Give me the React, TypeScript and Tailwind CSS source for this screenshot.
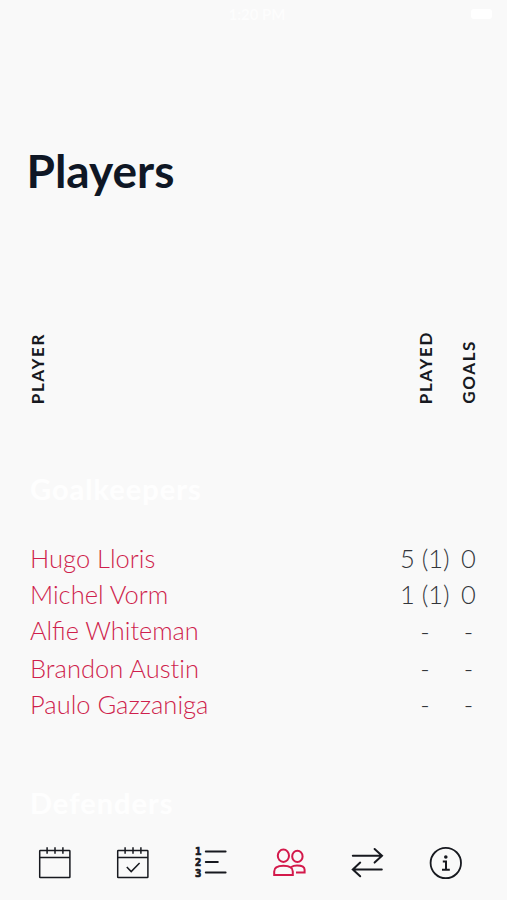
import React from 'react';

type Player = {
  name: string;
  played: string;
  goals: string;
};

const goalkeepers: Player[] = [
  { name: 'Hugo Lloris', played: '5 (1)', goals: '0' },
  { name: 'Michel Vorm', played: '1 (1)', goals: '0' },
  { name: 'Alfie Whiteman', played: '-', goals: '-' },
  { name: 'Brandon Austin', played: '-', goals: '-' },
  { name: 'Paulo Gazzaniga', played: '-', goals: '-' },
];

const CalendarIcon = ({ checked = false }: { checked?: boolean }) => (
  <svg width="36" height="36" viewBox="0 0 36 36" fill="none" stroke="currentColor" strokeWidth="1.5">
    <rect x="2.7" y="5.6" width="30.2" height="27" rx="0.6" />
    <path d="M2.8 12.6h30M10.1 2.2v6.6M18 2.2v6.6M25.9 2.2v6.6" />
    {checked && <path d="M11.8 22l4.4 4.6 8.4-8.6" />}
  </svg>
);

const TableIcon = () => (
  <svg width="36" height="36" viewBox="0 0 36 36" stroke="currentColor" strokeWidth="2" strokeLinecap="round">
    <path d="M12.8 6.4h19.8M12.8 17h12M12.8 27.6h19.8" />
    <g
      fill="currentColor"
      strokeWidth="0.7"
      className="font-['DejaVu_Sans_Mono',monospace] text-[10.5px] font-bold"
    >
      <text x="2" y="10">1</text>
      <text x="2" y="20.8">2</text>
      <text x="2" y="31.6">3</text>
    </g>
  </svg>
);

const PlayersIcon = () => (
  <svg width="36" height="36" viewBox="0 0 36 36" fill="none" stroke="currentColor" strokeWidth="2">
    <ellipse cx="11.4" cy="10.8" rx="5.6" ry="6.2" />
    <ellipse cx="25.4" cy="11.4" rx="5.2" ry="5.7" />
    <path d="M2.2 30v-3.6c0-4 4-5.6 9.2-5.6s9.4 1.6 9.4 5.6V30z" />
    <path d="M19.2 22c1.6-1 3.6-1.5 5.8-1.5 4.6 0 7.6 1.6 7.6 4.2v2.8H24" />
  </svg>
);

const TransfersIcon = () => (
  <svg width="36" height="36" viewBox="0 0 36 36" fill="none" stroke="currentColor" strokeWidth="2" strokeLinecap="round">
    <path d="M2.8 10.8h29M24.6 4l7.4 6.8-7.4 6.8" />
    <path d="M31.8 24.4h-29M10.2 17.6l-7.4 6.8 7.4 6.8" />
  </svg>
);

const InfoIcon = () => (
  <svg width="36" height="36" viewBox="0 0 36 36" fill="none" stroke="currentColor" strokeWidth="1.8">
    <circle cx="17.8" cy="18" r="15.2" />
    <circle cx="17.8" cy="12" r="1.8" fill="currentColor" stroke="none" />
    <path d="M14.8 16.6H18v8M14 24.8h7.8" strokeWidth="2" />
  </svg>
);

const tabs = [
  { id: 'fixtures', icon: <CalendarIcon /> },
  { id: 'results', icon: <CalendarIcon checked /> },
  { id: 'table', icon: <TableIcon /> },
  { id: 'players', icon: <PlayersIcon /> },
  { id: 'transfers', icon: <TransfersIcon /> },
  { id: 'info', icon: <InfoIcon /> },
];

const ColumnLabel = ({ children }: { children: React.ReactNode }) => (
  <span className="block rotate-180 text-[17px] leading-[20px] font-bold tracking-[1.6px] [writing-mode:vertical-rl]">
    {children}
  </span>
);

const SectionTitle = ({ children }: { children: React.ReactNode }) => (
  <h2 className="text-[29px] leading-[36px] font-bold tracking-[1px] text-white/85">{children}</h2>
);

// Keep the "fi" ligature but split the "ti" one
const PlayerName = ({ name }: { name: string }) => (
  <span className={name.includes('fi') ? 'flex-1 text-[25.3px]' : 'flex-1 [font-variant-ligatures:none]'}>{name}</span>
);

const PlayerRow = ({ player }: { player: Player }) => (
  <li className="flex h-[36.7px] items-center text-[25.5px] font-light text-[#cf1f4d]">
    <PlayerName name={player.name} />
    <span
      className={
        player.played === '-' ? 'w-[50px] text-center text-[#33363b]' : 'w-[50px] whitespace-nowrap text-[#33363b]'
      }
    >
      {player.played}
    </span>
    <span className="ml-[10px] w-[17px] text-center text-[#33363b]">{player.goals}</span>
  </li>
);

const App: React.FC = () => {
  return (
    <div className="flex h-[900px] w-[507px] flex-col overflow-hidden bg-[#f9f9f9] font-['Lato',sans-serif] text-[#17191f]">
      <header className="flex h-[28px] items-center justify-between pr-[15px] pl-[22px] text-white">
        <span className="w-[63px]" />
        <span className="text-[15px] leading-[18px] font-bold opacity-70">1:20 PM</span>
        <span className="flex w-[63px] justify-end">
          <span className="h-[10px] w-[21px] rounded-[3px] bg-white" />
        </span>
      </header>

      <h1 className="mt-[115px] pl-[26.5px] text-[46px] leading-[56px] font-bold text-[#0f1725]">Players</h1>

      <div className="mt-[125px] flex h-[80px] items-end pr-[28px] pl-[28px]">
        <div className="flex-1">
          <ColumnLabel>PLAYER</ColumnLabel>
        </div>
        <ColumnLabel>PLAYED</ColumnLabel>
        <div className="ml-[23px]">
          <ColumnLabel>GOALS</ColumnLabel>
        </div>
      </div>

      <main className="mt-[67px] h-[353px] pr-[30px] pl-[30px]">
        <SectionTitle>Goalkeepers</SectionTitle>
        <ul className="mt-[32.5px] mb-[62.5px]">
          {goalkeepers.map((player) => (
            <PlayerRow key={player.name} player={player} />
          ))}
        </ul>
        <SectionTitle>Defenders</SectionTitle>
      </main>

      <nav className="flex h-[76px] w-[485px] items-center pt-px pl-[16px]">
        {tabs.map((tab) => (
          <button
            key={tab.id}
            aria-label={tab.id}
            className={tab.id === 'players' ? 'flex flex-1 justify-center text-[#d3194b]' : 'flex flex-1 justify-center'}
          >
            {tab.icon}
          </button>
        ))}
      </nav>
    </div>
  );
};

export default App;
